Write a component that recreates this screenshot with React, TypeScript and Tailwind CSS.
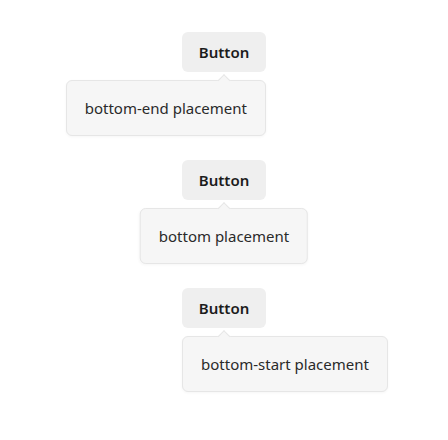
type Placement = "bottom-end" | "bottom" | "bottom-start";

const placements: Placement[] = ["bottom-end", "bottom", "bottom-start"];

function TooltipDemo({ placement }: { placement: Placement }) {
  const side =
    placement === "bottom-end"
      ? "right-0"
      : placement === "bottom-start"
        ? "left-0"
        : "left-1/2 -translate-x-1/2";

  return (
    <div className="flex h-[128px] justify-center">
      <div className="relative h-[40px]">
        <button className="h-[40px] w-[84px] rounded-md bg-[#efefef] text-[15px] font-semibold text-[#1c1c1c]">
          Button
        </button>
        <div
          className={`absolute top-full mt-[8px] whitespace-nowrap rounded-md border border-[#e6e6e6] bg-[#f6f6f6] px-[18px] py-[16px] text-[15px] leading-[22px] text-[#2a2a2a] shadow-[0_1px_3px_rgba(0,0,0,0.04)] ${side}`}
        >
          {placement} placement
        </div>
        {/* arrow sits at the button's centre */}
        <div className="absolute left-1/2 top-full mt-[3px] h-[9px] w-[9px] -translate-x-1/2 translate-y-[1px] rotate-45 border-l border-t border-[#e6e6e6] bg-[#f6f6f6]" />
      </div>
    </div>
  );
}

export default function App() {
  return (
    <div
      className="flex min-h-[440px] w-full flex-col items-center bg-white pt-[32px]"
      style={{ fontFamily: '"Noto Sans", "Open Sans", sans-serif' }}
    >
      {placements.map((p) => (
        <TooltipDemo key={p} placement={p} />
      ))}
    </div>
  );
}
